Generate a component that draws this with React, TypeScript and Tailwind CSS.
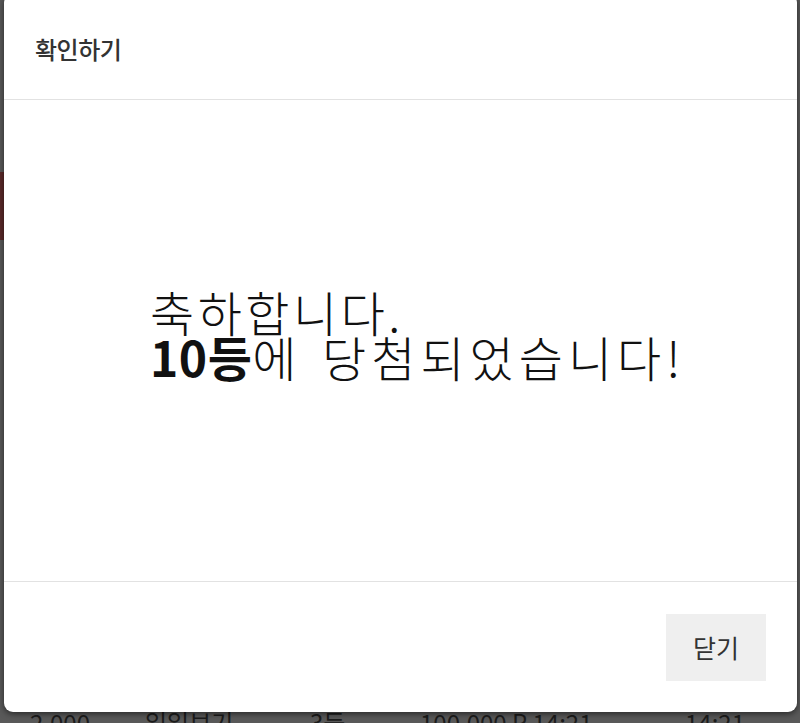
import React from "react";

const KR = "font-['Noto_Sans_CJK_KR','Noto_Sans',sans-serif]";

function BackgroundRow() {
  return (
    <div className={`absolute left-0 top-[710px] flex w-full items-start text-[24px] leading-none text-[#1c1c1c] ${KR}`}>
      <span className="ml-[30px] w-[115px]">2,000</span>
      <span className="w-[165px]">일일보기</span>
      <span className="w-[110px]">3등</span>
      <span className="w-[265px]">100,000 P 14:21</span>
      <span>14:21</span>
    </div>
  );
}

export default function App() {
  return (
    <div className={`relative h-[723px] w-[800px] overflow-hidden bg-[#595959] ${KR}`}>
      <div className="absolute left-0 top-[172px] h-[68px] w-[4px] bg-[#5a2a2a]" />
      <BackgroundRow />

      <div className="absolute left-[4px] top-[-6px] flex h-[718px] w-[793px] flex-col rounded-[9px] bg-white shadow-[0_2px_6px_rgba(0,0,0,0.55)]">
        <div className="flex h-[106px] shrink-0 items-center border-b border-[#e2e2e2] pl-[31px] pt-[4px]">
          <h2 className="text-[24px] font-medium tracking-[-0.5px] text-[#333]">확인하기</h2>
        </div>

        <div className="flex flex-1 flex-col justify-center pb-[14px] pl-[146px]">
          <p className="text-[48px] font-light leading-[45px] tracking-[3.5px] text-[#111]">
            축하합니다.
            <br />
            <span className="font-bold tracking-[0.5px]">10등</span>에 <span className="ml-[8px] tracking-[5px]">당첨되었습니다!</span>
          </p>
        </div>

        <div className="flex h-[131px] shrink-0 items-start justify-end border-t border-[#e2e2e2] pr-[31px] pt-[32px]">
          <button className="h-[67px] w-[100px] bg-[#efefef] text-[25px] text-[#333]">
            닫기
          </button>
        </div>
      </div>
    </div>
  );
}
